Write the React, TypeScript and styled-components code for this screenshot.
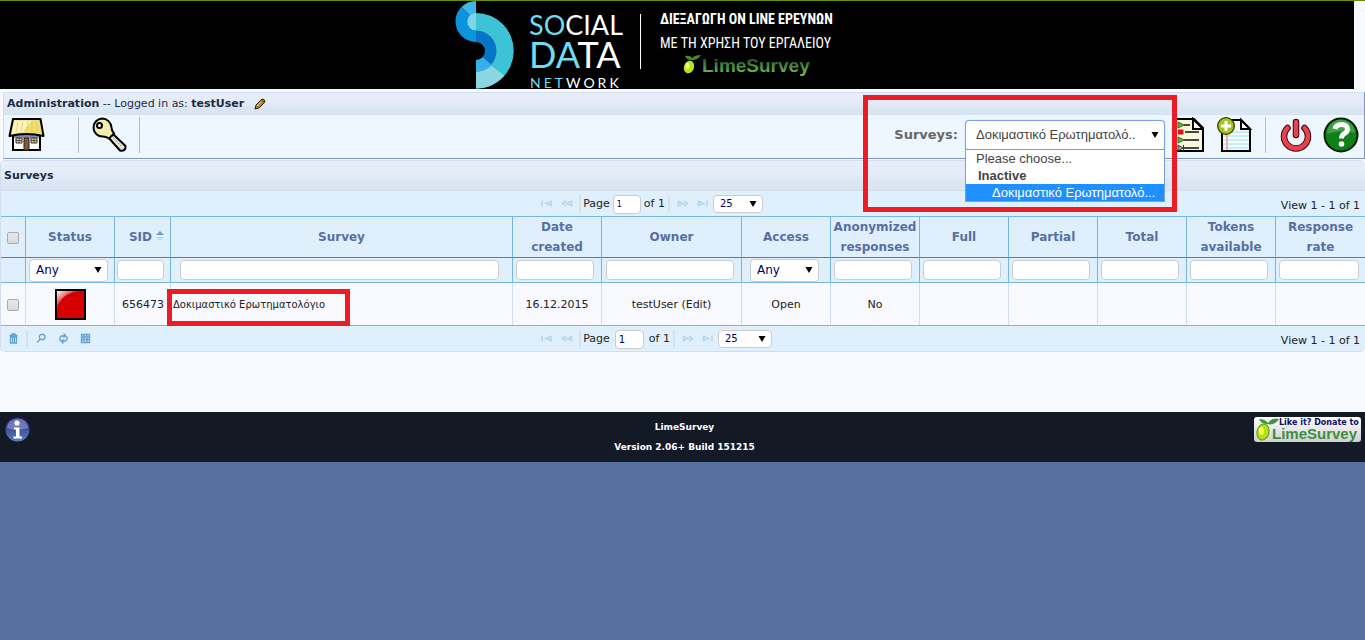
import React from "react";
import styled, { createGlobalStyle, css } from "styled-components";

const GlobalStyle = createGlobalStyle`
  *, *::before, *::after { box-sizing: border-box; }
  html { background: #56709f; }
  body {
    margin: 0;
    font-family: "DejaVu Sans", Verdana, sans-serif;
    font-size: 11px;
    line-height: 16px;
    color: #222;
  }
  button, input, select { font: inherit; margin: 0; }
`;

const Page = styled.div`
  background: #f8f8ff;
  border-top: 1px solid #6b8e00;
`;

const Banner = styled.header`
  display: flex;
  justify-content: center;
  gap: 17px;
  height: 88px;
  margin-right: 11px;
  padding-right: 66px;
  background: #000;
  overflow: hidden;
`;

const BannerCopy = styled.div`
  margin-top: 13px;
  padding-left: 19px;
  border-left: 1px solid #fff;
  height: 55px;
  width: 193px;
  color: #fff;
  font-family: "Roboto Condensed", "Liberation Sans Narrow", Roboto, sans-serif;
  font-size: 14px;
  white-space: nowrap;
`;

const BannerLine = styled.p<{ $strong?: boolean }>`
  margin: 0;
  height: 24px;
  line-height: 10px;
  font-weight: ${(p) => (p.$strong ? 700 : 400)};
`;

const LimeLogo = styled.div`
  display: flex;
  margin-left: 22px;
  margin-top: -9px;
`;

const AdminPanel = styled.section`
  margin: 3px 0 0 3px;
  border: 1px solid #d0def0;
  border-right-color: #8094c4;
  border-bottom-color: #8094c4;
  background: #eef6ff;
`;

const barFill = css`
  background: linear-gradient(#e7eef8 0%, #e1eaf6 55%, #d9e5f3 80%);
`;

const AdminTitle = styled.div`
  ${barFill}
  display: flex;
  align-items: center;
  gap: 10px;
  height: 22px;
  padding: 0 3px;
  border-bottom: 1px solid #d5e2f2;
  color: #1c2b44;
`;

const Toolbar = styled.div`
  display: flex;
  align-items: center;
  justify-content: space-between;
  height: 43px;
  padding: 0 5px 3px 4px;
`;

const ToolGroup = styled.div`
  display: flex;
  align-items: center;
`;

const IconButton = styled.button<{ $gap?: number }>`
  display: flex;
  padding: 0;
  border: 0;
  background: none;
  cursor: pointer;
  margin-right: ${(p) => p.$gap ?? 0}px;
`;

const Divider = styled.span<{ $gap?: number }>`
  width: 1px;
  height: 36px;
  background: #b9bcc4;
  margin-right: ${(p) => p.$gap ?? 0}px;
`;

const SurveyPicker = styled.div`
  position: relative;
  display: flex;
  align-items: center;
  gap: 7px;
  margin-right: 9px;
`;

const PickerLabel = styled.label`
  font-size: 13px;
  font-weight: 700;
  color: #666;
`;

const SelectWrap = styled.span<{ $width: string }>`
  position: relative;
  display: inline-flex;
  width: ${(p) => p.$width};

  svg {
    position: absolute;
    right: 6px;
    top: 50%;
    transform: translateY(-50%);
    pointer-events: none;
  }
`;

const Select = styled.select<{ $size: "small" | "medium" | "large" }>`
  appearance: none;
  width: 100%;
  padding: 0 16px 0 6px;
  border: 1px solid #ccc;
  border-radius: 4px;
  background: #fff;
  color: #00006b;
  line-height: 16px;
  ${(p) => p.$size === "small" && css`height: 18px; font-size: 10px;`}
  ${(p) => p.$size === "medium" && css`height: 23px; font-size: 12px;`}
  ${(p) =>
    p.$size === "large" &&
    css`
      height: 31px;
      padding-left: 10px;
      border-color: #7aa0ea;
      box-shadow: 0 0 1px #7aa0ea;
      font-family: "Liberation Sans", Arial, sans-serif;
      font-size: 13px;
      color: #444;
    `}
`;

const OptionList = styled.ul`
  position: absolute;
  z-index: 2;
  top: 29px;
  left: 0;
  right: 0;
  margin: 0;
  padding: 0;
  list-style: none;
  border: 1px solid #7a9fd4;
  background: #fff;
  font-family: "Liberation Sans", Arial, sans-serif;
  font-size: 13px;
  line-height: 17px;
  color: #444;
`;

const Option = styled.li<{ $kind?: "group" | "active" }>`
  padding-left: 10px;
  white-space: nowrap;
  ${(p) => p.$kind === "group" && css`padding-left: 12px; font-weight: 700;`}
  ${(p) => p.$kind === "active" && css`padding-left: 26px; background: #1e90ff; color: #fff;`}
`;

const Highlight = styled.span`
  position: absolute;
  z-index: 3;
  border: 5px solid #ed1c24;
  pointer-events: none;
`;

const PickerHighlight = styled(Highlight)`
  inset: -25px -12px -61px -31px;
`;

const NameHighlight = styled(Highlight)`
  top: 6px;
  bottom: -1px;
  left: -4px;
  width: 183px;
`;

const GridPanel = styled.section`
  margin-top: 1px;
  border: 1px solid #d0def0;
  border-width: 1px 0 1px 1px;
  border-radius: 5px;
  overflow: hidden;
`;

const GridTitle = styled.h1`
  ${barFill}
  margin: 0;
  height: 30px;
  padding: 0 3px;
  border-bottom: 1px solid #d0def0;
  font-size: 11px;
  line-height: 30px;
  color: #1c2b44;
`;

const PagerBar = styled.div`
  display: grid;
  grid-template-columns: 39.6% auto 1fr;
  align-items: center;
  height: 25px;
  background: #dfeffc;
`;

const PagerTools = styled.div`
  display: flex;
  align-items: center;
  padding-left: 7px;
`;

const PagerNav = styled.div`
  display: flex;
  align-items: center;
`;

const PagerLabel = styled.label<{ $gap: number }>`
  display: flex;
  align-items: center;
  gap: ${(p) => p.$gap}px;
`;

const PageInput = styled.input<{ $size: "small" | "medium" }>`
  width: ${(p) => (p.$size === "small" ? 28 : 29)}px;
  height: 19px;
  margin-top: 2px;
  padding: 0 3px;
  border: 1px solid #ccc;
  border-radius: 4px;
  background: #fff;
  color: #00006b;
  font-size: ${(p) => (p.$size === "small" ? 8 : 10)}px;
`;

const PagerRule = styled.span<{ $gap: string }>`
  width: 2px;
  height: 18px;
  background: #d3e3ee;
  margin: ${(p) => p.$gap};
`;

const PagerView = styled.div`
  padding: 4px 5px 0 0;
  text-align: right;
`;

const Table = styled.table`
  width: 100%;
  table-layout: fixed;
  border-collapse: separate;
  border-spacing: 0;
  border-bottom: 1px solid #77b5e3;
  background: #f8f8ff;
`;

const HeadCell = styled.th`
  height: 42px;
  padding: 0 2px;
  border-top: 1px solid #77b5e3;
  border-right: 1px solid #77b5e3;
  border-bottom: 1px solid #777;
  background: #dfeffc;
  color: #576fa3;
  font-size: 12px;
  line-height: 20px;
  &:last-child { border-right: 0; }
`;

const SortButton = styled.button`
  display: inline-flex;
  align-items: center;
  gap: 4px;
  padding: 0 0 0 8px;
  border: 0;
  background: none;
  color: inherit;
  font-weight: inherit;
`;

const FilterCell = styled.td<{ $pad?: string }>`
  height: 25px;
  padding: ${(p) => p.$pad ?? "0 7px 0 3px"};
  border-right: 1px solid #77b5e3;
  border-bottom: 1px solid #77b5e3;
  background: #dfeffc;
  line-height: 0;
  &:last-child { border-right: 0; }
`;

const FilterInput = styled.input`
  display: block;
  width: 100%;
  height: 20px;
  border: 1px solid #ccc;
  border-radius: 4px;
  background: #fff;
`;

const BodyCell = styled.td`
  position: relative;
  height: 42px;
  padding: 1px 0 0;
  border-right: 1px solid #d0def0;
  text-align: center;
  white-space: nowrap;
  &:last-child { border-right: 0; }
`;

const IdCell = styled(BodyCell)`
  padding-right: 6px;
  text-align: right;
`;

const NameCell = styled(BodyCell)`
  padding-left: 2px;
  text-align: left;
  font-size: 10px;
`;

const CheckBox = styled.input`
  appearance: none;
  display: block;
  width: 12px;
  height: 12px;
  && { margin: 1px auto 0; }
  border: 1px solid #aaa;
  border-radius: 2px;
  background: linear-gradient(#e8e8e8, #dadada);
`;

const StatusIcon = styled.svg`
  display: block;
  margin: 0 auto;
`;

const Footer = styled.footer`
  display: grid;
  grid-template-columns: 110px 1fr 107px;
  height: 50px;
  margin-top: 60px;
  padding: 5px 4px 0 5px;
  background: #131a26;
  color: #fff;
`;

const FooterText = styled.div`
  text-align: center;
  font-size: 9px;
  font-weight: 700;
  line-height: 20px;
`;

const FooterLink = styled.a`
  display: block;
  height: 25px;
`;

const Caret = () => (
  <svg width="8" height="7" viewBox="0 0 8 7" aria-hidden="true">
    <path d="M0.5 0.5h7L4 6.5z" fill="#000" />
  </svg>
);

const NetworkLogo = () => (
  <svg width="168" height="88" viewBox="0 0 168 88" role="img" aria-label="Social Data Network">
    <path d="M21 0A20.500 20.500 0 0 0 6.500 6L21 20.500z" fill="#3fb6ea" />
    <path d="M6.500 6A20.500 20.500 0 0 0 21 41V20.500z" fill="#0b93dc" />
    <path d="M21 12a37.750 37.750 0 0 1 0 75.500z" fill="#3cc3d6" />
    <path d="M21 70L35.500 64 49.500 74.500A37.750 37.750 0 0 1 21 87.500z" fill="#8ad6e2" />
    <path d="M21 12a8.750 8.750 0 0 0 0 17.500z" fill="#7fd4ea" />
    <path d="M21 29.500a20.500 20.500 0 0 1 0 41z" fill="#0874c6" />
    <path d="M21 50l15.500 14A20.500 20.500 0 0 1 21 70.500z" fill="#38aeea" />
    <path d="M21 41a9 9 0 0 1 0 18z" fill="#000" />
    <g fontFamily="Lato, sans-serif" fontWeight="400" fill="#fff">
      <text x="74" y="34" fontSize="27"><tspan fill="#6fdcf0">SO</tspan>CIAL</text>
      <text x="74" y="67" fontSize="36"><tspan fill="#6fdcf0">DA</tspan>TA</text>
      <text x="75" y="87" fontSize="14" letterSpacing="3"><tspan fill="#6fdcf0">NET</tspan>WORK</text>
    </g>
  </svg>
);

const LimeMark = () => (
  <svg width="132" height="24" viewBox="0 0 132 24" role="img" aria-label="LimeSurvey">
    <defs>
      <linearGradient id="limeText" x1="0" y1="0" x2="0" y2="1">
        <stop offset="0.2" stopColor="#1f5a22" />
        <stop offset="1" stopColor="#7fc95a" />
      </linearGradient>
    </defs>
    <ellipse cx="7" cy="14" rx="5" ry="6.500" transform="rotate(20 7 14)" fill="#b5e61d" />
    <ellipse cx="5.500" cy="13" rx="2" ry="3" fill="#eaff6a" />
    <path d="M8 7Q4 6 3 3Q8 2 10 5Q13 2 19 2Q16 7 10 7z" fill="#3f8f2b" />
    <text x="20" y="19" fontFamily="Liberation Sans, Arial, sans-serif" fontWeight="700" fontSize="19" fill="url(#limeText)">LimeSurvey</text>
  </svg>
);

const Pencil = () => (
  <svg width="12" height="12" viewBox="0 0 12 12" aria-hidden="true">
    <path d="M1 11l1-4 6-6q3 0 3 3l-6 6z" fill="#b8862b" stroke="#2e2310" />
    <path d="M8.500 2.500l1.500 1.500" stroke="#c22" strokeWidth="1.500" />
    <path d="M3 8l4-4" stroke="#f1d27a" />
  </svg>
);

const House = () => (
  <svg width="37" height="36" viewBox="0 0 37 36" aria-hidden="true">
    <path d="M5 17h27v16H5z" fill="#fff" stroke="#000" strokeWidth="2" />
    <path d="M6 17h25v4H6z" fill="#8686bd" />
    <path d="M5 2h27.500l3 17q-17-4-34 0z" fill="#efdf72" stroke="#000" strokeWidth="2" strokeLinejoin="round" />
    <path d="M6.500 3.500h17L15 15q-8 1-11.500 2z" fill="#fff8cf" opacity=".8" />
    <path d="M10 5L8 15M15 5l-2 9M20 4l-1 10M24 4v11M28 4l2 12" stroke="#d8bd45" strokeWidth=".6" />
    <path d="M8 21h6v5H8zM23 21h6v5h-6z" fill="#d9cf91" stroke="#333" />
    <path d="M11 21v5M8 23.500h6M26 21v5M23 23.500h6" stroke="#333" strokeWidth=".7" />
    <path d="M16 21h5v12h-5z" fill="#8a5b33" stroke="#222" />
  </svg>
);

const KeyIcon = () => (
  <svg width="36" height="36" viewBox="0 0 36 36" aria-hidden="true">
    <path d="M17 20L29 33.500q6 1 5.500-4.500L21 16z" fill="#e6e6d8" stroke="#000" strokeWidth="2" strokeLinejoin="round" />
    <path d="M21 19l10 11" stroke="#888" strokeDasharray="2 1" />
    <path d="M11 1.500a9.500 9.500 0 0 1 9.500 9q0 3 2.500 6l-5 5q-3-2-6-2a9 9 0 0 1-1-18z" fill="#f2edae" stroke="#000" strokeWidth="2" />
    <circle cx="8.500" cy="8.500" r="2.500" fill="#fff" stroke="#000" strokeWidth="2" />
  </svg>
);

const ListDoc = () => (
  <svg width="30" height="36" viewBox="0 0 30 36" aria-hidden="true">
    <path d="M0 2h20l9 9v23H0z" fill="#f7f7dc" stroke="#000" strokeWidth="2" />
    <path d="M19 2v10h10z" fill="#fff" stroke="#000" strokeWidth="2" />
    <path d="M10 8h6M11 15h14M10 23h15M10 31h15" stroke="#111" strokeWidth="1.500" />
    <path d="M4 5l6 3-6 3zM4 20l6 3-6 3z" fill="#62b845" stroke="#276b1c" />
    <path d="M4 12.500h5.500v5H4z" fill="#e01010" />
    <path d="M4 28l5 3-5 3zM9.500 28v6" fill="#aaa" stroke="#333" />
  </svg>
);

const NewDoc = () => (
  <svg width="36" height="36" viewBox="0 0 36 36" aria-hidden="true">
    <path d="M5 3h19l9 9v22H5z" fill="#f4fdff" stroke="#000" strokeWidth="2" />
    <path d="M6 15h26M6 19h26M6 23h26M6 27h26M6 31h26" stroke="#9be0ec" strokeWidth="1.200" />
    <path d="M10 14v19" stroke="#f7a9a9" strokeWidth="2" />
    <path d="M24 3v9h9z" fill="#fff" stroke="#000" strokeWidth="2" />
    <circle cx="9" cy="9" r="8.300" fill="#a4c520" stroke="#333d00" strokeWidth="1.300" />
    <path d="M9 4v10M4 9h10" stroke="#fff" strokeWidth="3" />
  </svg>
);

const Power = () => (
  <svg width="32" height="36" viewBox="0 0 32 36" fill="none" strokeLinecap="round" aria-hidden="true">
    <path d="M7.500 11a12 12 0 1 0 17 0" stroke="#3b0508" strokeWidth="6.500" />
    <path d="M7.500 11a12 12 0 1 0 17 0" stroke="#e4444d" strokeWidth="4.500" />
    <path d="M16 5v13" stroke="#3b0508" strokeWidth="6.500" />
    <path d="M16 5v13" stroke="#e4444d" strokeWidth="4.500" />
  </svg>
);

const Help = () => (
  <svg width="36" height="36" viewBox="0 0 36 36" aria-hidden="true">
    <circle cx="18" cy="18" r="16.500" fill="#0f8015" stroke="#061f08" strokeWidth="2" />
    <path d="M4 17a14 14 0 0 1 28-1Q17 12 4 17z" fill="#6fba70" opacity=".5" />
    <path d="M12 12q1-4.500 6.500-4.500t6 4.500q0 3-3 4.500-3 1.500-3 5" fill="none" stroke="#fff" strokeWidth="5" />
    <circle cx="18.500" cy="27" r="2.800" fill="#fff" />
  </svg>
);

const pagerGlyphs = {
  first: "M1 1.500v6M10 2.500v4L5 4.500z",
  prev: "M5 2L1.500 4.500l3.500 2.500M10.500 2.500v4L6 4.500z",
  next: "M7 2l3.500 2.500-3.500 2.500M1.500 2.500v4l4.500-2z",
  last: "M10 1.500v6M1.500 2.500v4l5-2z",
};

const PagerButton = ({ kind, gap }: { kind: keyof typeof pagerGlyphs; gap: number }) => (
  <IconButton type="button" disabled aria-label={`${kind} page`} $gap={gap}>
    <svg width="12" height="9" viewBox="0 0 12 9" fill="none">
      <path d={pagerGlyphs[kind]} stroke="#b4d6ef" strokeWidth="1.600" />
    </svg>
  </IconButton>
);

const toolGlyphs = {
  "Delete selected": "M1.500 2.500h8M4 2V1h3v1M2.500 4h6v6h-6zM4.500 4v6M6.500 4v6",
  Search: "M4.500 1.500h3l1.500 1.500v2l-1.500 1.500h-3l-1-1.500v-2zM4 6.500L1 9.500",
  Reload: "M3.500 8Q1 7 2 4.500L3.500 3H7M5.500 0.500l2 2-2 2M7.500 3Q10 4 9 6.500L7.500 8H4M5.500 6.500l-2 2 2 2",
  Columns: "M1.500 1.500h8v8h-8zM1 4h9M1 6.500h9M4 1v9M7 1v9",
};

const ToolButton = ({ name, gap }: { name: keyof typeof toolGlyphs; gap: number }) => (
  <IconButton type="button" aria-label={name} $gap={gap}>
    <svg width="11" height="11" viewBox="0 0 11 11" fill="none">
      <path d={toolGlyphs[name]} stroke="#5fa3d6" strokeWidth="1.300" />
    </svg>
  </IconButton>
);

const Pager = ({ size }: { size: "small" | "medium" }) => (
  <>
    <PagerNav>
      <PagerButton kind="first" gap={8} />
      <PagerButton kind="prev" gap={6} />
      <PagerRule $gap="0 2px 0 0" />
      <PagerLabel $gap={size === "small" ? 3 : 5}>
        Page
        <PageInput $size={size} defaultValue="1" />
        of 1
      </PagerLabel>
      <PagerRule $gap="0 7px 0 3px" />
      <PagerButton kind="next" gap={8} />
      <PagerButton kind="last" gap={4} />
      <SelectWrap $width={size === "small" ? "50px" : "54px"}>
        <Select $size="small" aria-label="Rows per page">
          <option>25</option>
        </Select>
        <Caret />
      </SelectWrap>
    </PagerNav>
    <PagerView>View 1 - 1 of 1</PagerView>
  </>
);

const columns: { title: string; width?: number }[] = [
  { title: "Status", width: 89 },
  { title: "SID", width: 56 },
  { title: "Survey" },
  { title: "Date created", width: 89 },
  { title: "Owner", width: 140 },
  { title: "Access", width: 89 },
  { title: "Anonymized responses", width: 89 },
  { title: "Full", width: 89 },
  { title: "Partial", width: 89 },
  { title: "Total", width: 89 },
  { title: "Tokens available", width: 89 },
  { title: "Response rate", width: 89 },
];

const filterPads: Record<string, string> = {
  Status: "0 6px 0 3px",
  SID: "0 6px 0 2px",
  Survey: "0 13px 0 9px",
  Owner: "0 7px 0 4px",
  Access: "0 11px 0 8px",
  "Response rate": "0 6px 0 3px",
};

const SurveyGrid = () => (
  <Table>
    <colgroup>
      <col style={{ width: 25 }} />
      {columns.map((c) => (
        <col key={c.title} style={{ width: c.width }} />
      ))}
    </colgroup>
    <thead>
      <tr>
        <HeadCell>
          <CheckBox type="checkbox" aria-label="Select all" />
        </HeadCell>
        {columns.map(({ title }) => (
          <HeadCell key={title} scope="col">
            {title === "SID" ? (
              <SortButton type="button">
                SID
                <svg width="8" height="12" viewBox="0 0 8 12" aria-hidden="true">
                  <path d="M0 4h8L4 0z" fill="#5fa3d6" />
                  <path d="M0 6h8l-4 4z" fill="#b9d9f0" />
                </svg>
              </SortButton>
            ) : (
              title
            )}
          </HeadCell>
        ))}
      </tr>
      <tr>
        <FilterCell />
        {columns.map(({ title }) => (
          <FilterCell key={title} $pad={filterPads[title]}>
            {title === "Status" || title === "Access" ? (
              <SelectWrap $width="100%">
                <Select $size="medium" aria-label={`Filter ${title}`}>
                  <option>Any</option>
                </Select>
                <Caret />
              </SelectWrap>
            ) : (
              <FilterInput type="text" aria-label={`Filter ${title}`} />
            )}
          </FilterCell>
        ))}
      </tr>
    </thead>
    <tbody>
      <tr>
        <BodyCell>
          <CheckBox type="checkbox" aria-label="Select survey 656473" />
        </BodyCell>
        <BodyCell>
          <StatusIcon width="31" height="31" viewBox="0 0 32 32" role="img" aria-label="Inactive">
            <defs>
              <linearGradient id="gloss" x1="0" y1="0" x2=".8" y2=".8">
                <stop offset="0" stopColor="#fff" />
                <stop offset=".7" stopColor="#d60000" />
              </linearGradient>
            </defs>
            <rect x="1" y="1" width="30" height="30" fill="#d60000" stroke="#000" strokeWidth="2" />
            <path d="M2 2h22Q6 5 2 20z" fill="url(#gloss)" />
          </StatusIcon>
        </BodyCell>
        <IdCell>656473</IdCell>
        <NameCell>
          Δοκιμαστικό Ερωτηματολόγιο
          <NameHighlight />
        </NameCell>
        <BodyCell>16.12.2015</BodyCell>
        <BodyCell>testUser (Edit)</BodyCell>
        <BodyCell>Open</BodyCell>
        <BodyCell>No</BodyCell>
        <BodyCell />
        <BodyCell />
        <BodyCell />
        <BodyCell />
        <BodyCell />
      </tr>
    </tbody>
  </Table>
);

export default function App() {
  return (
    <>
      <GlobalStyle />
      <Page>
        <Banner>
          <NetworkLogo />
          <BannerCopy>
            <BannerLine $strong>ΔΙΕΞΑΓΩΓΗ ON LINE ΕΡΕΥΝΩΝ</BannerLine>
            <BannerLine>ΜΕ ΤΗ ΧΡΗΣΗ ΤΟΥ ΕΡΓΑΛΕΙΟΥ</BannerLine>
            <LimeLogo>
              <LimeMark />
            </LimeLogo>
          </BannerCopy>
        </Banner>

        <AdminPanel>
          <AdminTitle>
            <span>
              <strong>Administration</strong> -- Logged in as: <strong>testUser</strong>
            </span>
            <IconButton type="button" aria-label="Edit account">
              <Pencil />
            </IconButton>
          </AdminTitle>
          <Toolbar>
            <ToolGroup>
              <IconButton type="button" aria-label="Home" $gap={33}>
                <House />
              </IconButton>
              <Divider $gap={12} />
              <IconButton type="button" aria-label="Security" $gap={12}>
                <KeyIcon />
              </IconButton>
              <Divider />
            </ToolGroup>
            <ToolGroup>
              <SurveyPicker>
                <PickerLabel htmlFor="survey">Surveys:</PickerLabel>
                <SelectWrap $width="200px">
                  <Select id="survey" $size="large">
                    <option>Δοκιμαστικό Ερωτηματολό..</option>
                  </Select>
                  <Caret />
                  <OptionList role="listbox" aria-label="Surveys">
                    <Option role="option">Please choose...</Option>
                    <Option $kind="group" role="presentation">Inactive</Option>
                    <Option $kind="active" role="option" aria-selected="true">
                      Δοκιμαστικό Ερωτηματολό...
                    </Option>
                  </OptionList>
                </SelectWrap>
                <PickerHighlight />
              </SurveyPicker>
              <IconButton type="button" aria-label="List surveys" $gap={13}>
                <ListDoc />
              </IconButton>
              <IconButton type="button" aria-label="Create survey" $gap={12}>
                <NewDoc />
              </IconButton>
              <Divider $gap={14} />
              <IconButton type="button" aria-label="Log out" $gap={11}>
                <Power />
              </IconButton>
              <IconButton type="button" aria-label="Help">
                <Help />
              </IconButton>
            </ToolGroup>
          </Toolbar>
        </AdminPanel>

        <GridPanel>
          <GridTitle>Surveys</GridTitle>
          <PagerBar>
            <span />
            <Pager size="small" />
          </PagerBar>
          <SurveyGrid />
          <PagerBar>
            <PagerTools>
              <ToolButton name="Delete selected" gap={7} />
              <PagerRule $gap="0 8px 0 0" />
              <ToolButton name="Search" gap={11} />
              <ToolButton name="Reload" gap={11} />
              <ToolButton name="Columns" gap={0} />
            </PagerTools>
            <Pager size="medium" />
          </PagerBar>
        </GridPanel>

        <Footer>
          <FooterLink href="#about" aria-label="About">
            <svg width="25" height="25" viewBox="0 0 25 25" aria-hidden="true">
              <defs>
                <linearGradient id="info" x1="0" y1="0" x2="0" y2="1">
                  <stop offset="0" stopColor="#26267f" />
                  <stop offset="1" stopColor="#5a7fb8" />
                </linearGradient>
              </defs>
              <circle cx="12.500" cy="12.500" r="12" fill="url(#info)" />
              <path d="M2 11a10.500 9.500 0 0 1 21 0Q12 14 2 11z" fill="#9a9fd4" opacity=".6" />
              <circle cx="12" cy="6" r="2.600" fill="#fff" />
              <path d="M9 10.500h5.500v9H17v2H8.500v-2H11v-7H9z" fill="#fff" />
            </svg>
          </FooterLink>
          <FooterText>
            LimeSurvey
            <br />
            Version 2.06+ Build 151215
          </FooterText>
          <FooterLink href="#donate">
            <svg width="107" height="25" viewBox="0 0 107 25" role="img" aria-label="Like it? Donate to LimeSurvey">
              <defs>
                <linearGradient id="plate" x1="0" y1="0" x2="0" y2="1">
                  <stop offset="0" stopColor="#fff" />
                  <stop offset="1" stopColor="#cfcfcf" />
                </linearGradient>
              </defs>
              <rect width="107" height="25" rx="3" fill="url(#plate)" />
              <ellipse cx="9" cy="15" rx="6" ry="8" transform="rotate(15 9 15)" fill="#b4e012" stroke="#4d9a1c" />
              <ellipse cx="7.500" cy="14" rx="2.500" ry="4" fill="#f4ff5e" />
              <path d="M13 7Q7 7 5 2Q11 2 14 6Q18 0 25 2Q21 9 13 7z" fill="#3d9a3a" />
              <text x="25" y="8" fontFamily="DejaVu Sans, sans-serif" fontWeight="700" fontSize="8" fill="#0d0d66">Like it? Donate to</text>
              <text x="18" y="22" fontFamily="Liberation Sans, sans-serif" fontWeight="700" fontSize="15" fill="#3b8f41">LimeSurvey</text>
            </svg>
          </FooterLink>
        </Footer>
      </Page>
    </>
  );
}
